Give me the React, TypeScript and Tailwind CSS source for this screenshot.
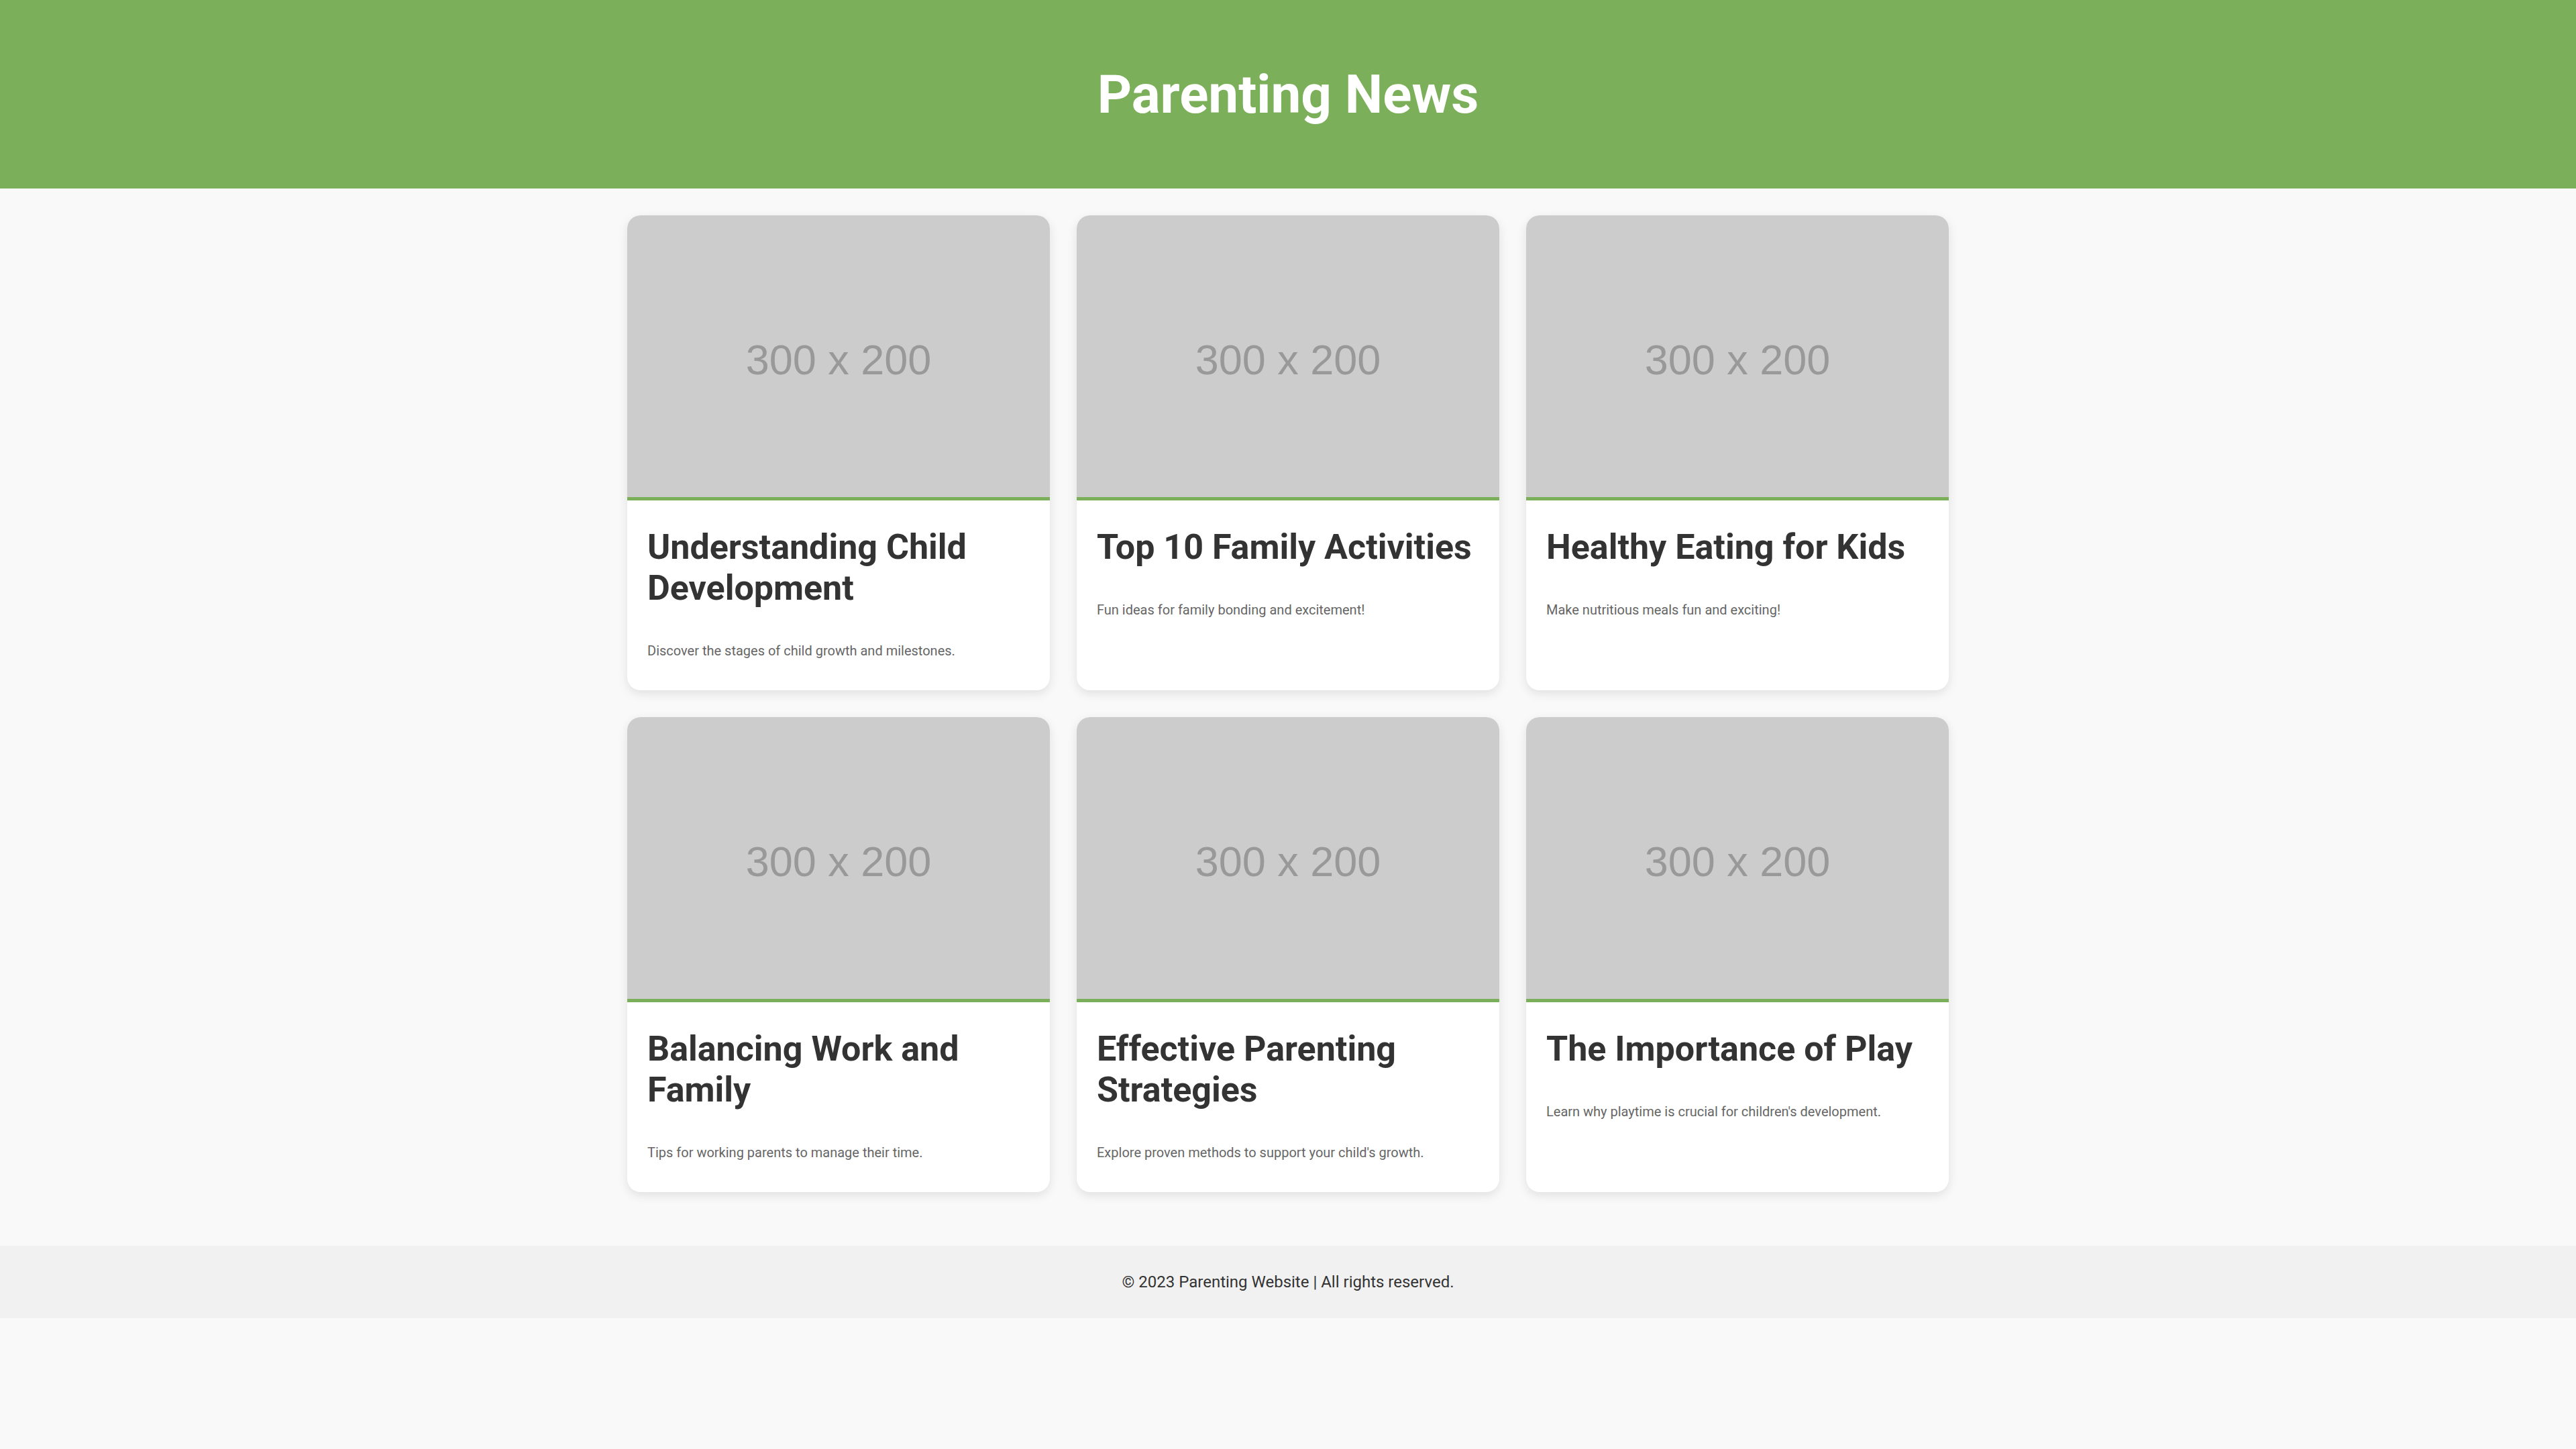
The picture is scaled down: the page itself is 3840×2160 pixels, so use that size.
import React from 'react'

type Article = {
  title: string
  text: string
}

const articles: Article[] = [
  { title: 'Understanding Child Development', text: 'Discover the stages of child growth and milestones.' },
  { title: 'Top 10 Family Activities', text: 'Fun ideas for family bonding and excitement!' },
  { title: 'Healthy Eating for Kids', text: 'Make nutritious meals fun and exciting!' },
  { title: 'Balancing Work and Family', text: 'Tips for working parents to manage their time.' },
  { title: 'Effective Parenting Strategies', text: "Explore proven methods to support your child's growth." },
  { title: 'The Importance of Play', text: "Learn why playtime is crucial for children's development." },
]

function ArticleCard({ title, text }: Article) {
  return (
    <div className="bg-white rounded-[20px] overflow-hidden shadow-[0_5px_15px_rgba(0,0,0,0.1)]">
      {/* placeholder image */}
      <div className="h-[425px] bg-[#cccccc] border-b-[5px] border-[#7baf5a] flex items-center justify-center pt-[10px]">
        <span className="text-[63px] text-[#999999] font-['Liberation_Sans',Arial,sans-serif]">300 x 200</span>
      </div>
      <div className="pt-[39px] px-[30px] pb-[44px]">
        <h2 className="text-[52px] leading-[61px] font-bold text-[#333333] mb-[48px]">{title}</h2>
        <p className="text-[20px] leading-[30px] text-[#666666]">{text}</p>
      </div>
    </div>
  )
}

export default function App() {
  return (
    <div className="min-h-screen bg-[#f9f9f9] font-['Roboto',sans-serif]">
      <header className="bg-[#7baf5a] h-[281px] flex items-center justify-center">
        <h1 className="text-white text-[80px] font-bold leading-[94px]">Parenting News</h1>
      </header>

      <main className="py-10">
        <div className="w-[1970px] mx-auto grid grid-cols-3 gap-10">
          {articles.map((a, i) => (
            <ArticleCard key={i} title={a.title} text={a.text} />
          ))}
        </div>
      </main>

      <footer className="mt-10 bg-[#f1f1f1] py-10 text-center">
        <p className="text-[24px] leading-[28px] text-[#333333]">© 2023 Parenting Website | All rights reserved.</p>
      </footer>
    </div>
  )
}
